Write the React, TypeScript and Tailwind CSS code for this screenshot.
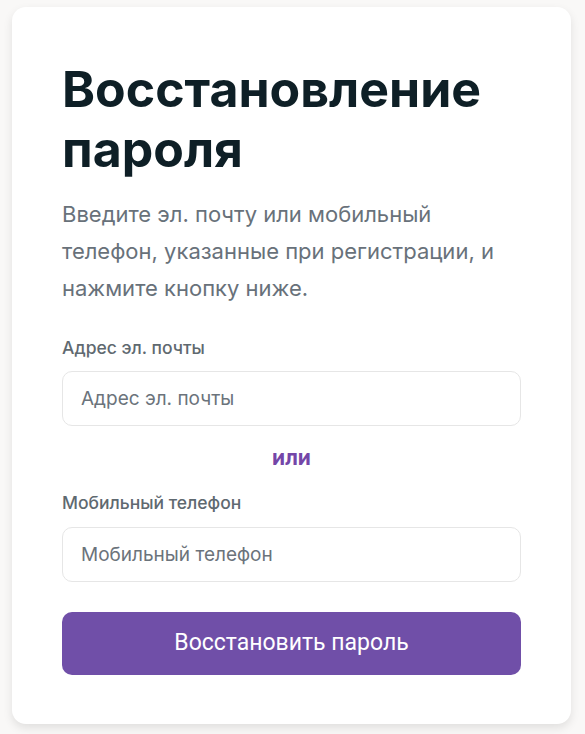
import React from 'react';

const font = { fontFamily: 'Inter, "Noto Sans", sans-serif' };

export default function App() {
  return (
    <div className="min-h-screen bg-[#f9f8f7] px-[12px] pt-[7px] pb-[10px]" style={font}>
      <div className="w-[559px] rounded-[14px] bg-white shadow-[0_4px_10px_rgba(0,0,0,0.10)] px-[50px] pt-[52px] pb-[49px]">
        <h1 className="text-[50px] leading-[60px] font-bold text-[#0e1f26]">Восстановление пароля</h1>
        <p className="mt-[17px] text-[22px] leading-[37px] text-[#68717a]">
          Введите эл. почту или мобильный телефон, указанные при регистрации, и нажмите кнопку ниже.
        </p>
        <form className="mt-[30px]" onSubmit={e => e.preventDefault()}>
          <label className="block text-[17.5px] leading-[22px] font-medium text-[#5f6970]">Адрес эл. почты</label>
          <input
            type="email"
            placeholder="Адрес эл. почты"
            className="mt-[12px] block w-full h-[55px] rounded-[10px] border border-[#e6e6e6] px-[18px] text-[19px] text-[#333] placeholder:text-[#6b737b] outline-none"
          />
          <div className="mt-[18px] text-center text-[21px] leading-[28px] font-bold text-[#7446a8]">или</div>
          <label className="mt-[20px] block text-[17.5px] leading-[22px] font-medium text-[#5f6970]">Мобильный телефон</label>
          <input
            type="tel"
            placeholder="Мобильный телефон"
            className="mt-[13px] block w-full h-[55px] rounded-[10px] border border-[#e6e6e6] px-[18px] text-[19px] text-[#333] placeholder:text-[#6b737b] outline-none"
          />
          <button
            type="submit"
            className="mt-[30px] w-full h-[63px] rounded-[10px] bg-[#704fa8] text-white text-[23px]"
            style={{ fontFamily: 'Roboto, Inter, sans-serif' }}
          >
            Восстановить пароль
          </button>
        </form>
      </div>
    </div>
  );
}
